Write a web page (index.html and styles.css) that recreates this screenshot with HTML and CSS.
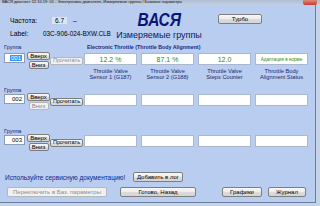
FILE: index.html
```html
<!DOCTYPE html>
<html lang="ru">
<head>
<meta charset="utf-8">
<title>ВАСЯ диагност</title>
<link rel="stylesheet" href="styles.css">
</head>
<body>
<div class="frame">
  <div class="titlebar">
    <span class="title">ВАСЯ диагност 12.10.19: 01 - Электроника двигателя, Измеряемые группы / Базовые параметры</span>
    <span class="close"></span>
  </div>
  <div class="window">
    <div class="head">
      <div class="head-left">
        <div class="info-row freq-row">
          <span class="lbl">Частота:</span>
          <span class="freq-box">6.7</span>
          <span class="dash">–</span>
        </div>
        <div class="info-row label-row">
          <span class="lbl">Label:</span>
          <span class="label-val">03C-906-024-BXW.CLB</span>
        </div>
      </div>
      <div class="head-center">
        <div class="brand">ВАСЯ</div>
        <div class="subtitle">Измеряемые группы</div>
      </div>
      <button class="btn turbo">Турбо</button>
    </div>

    <div class="groups">
      <section class="group group--titled">
        <div class="group-top">
          <span class="group-lbl">Группа</span>
          <span class="group-title">Electronic Throttle (Throttle Body Alignment)</span>
        </div>
        <div class="group-row">
          <div class="grp-input"><span class="sel">001</span></div>
          <div class="updown">
            <button class="btn up">Вверх</button>
            <button class="btn down">Вниз</button>
          </div>
          <button class="btn read" disabled>Прочитать</button>
          <div class="cells">
            <div class="cell"><div class="val">12.2 %</div><div class="cap">Throttle Valve<br>Sensor 1 (G187)</div></div>
            <div class="cell"><div class="val">87.1 %</div><div class="cap">Throttle Valve<br>Sensor 2 (G188)</div></div>
            <div class="cell"><div class="val">12.0</div><div class="cap">Throttle Valve<br>Steps Counter</div></div>
            <div class="cell"><div class="val val--small">Адаптация в норме</div><div class="cap">Throttle Body<br>Alignment Status</div></div>
          </div>
        </div>
      </section>

      <section class="group">
        <div class="group-top"><span class="group-lbl">Группа</span></div>
        <div class="group-row">
          <div class="grp-input"><span>002</span></div>
          <div class="updown">
            <button class="btn up">Вверх</button>
            <button class="btn down" disabled>Вниз</button>
          </div>
          <button class="btn read">Прочитать</button>
          <div class="cells">
            <div class="cell"><div class="val"></div></div>
            <div class="cell"><div class="val"></div></div>
            <div class="cell"><div class="val"></div></div>
            <div class="cell"><div class="val"></div></div>
          </div>
        </div>
      </section>

      <section class="group">
        <div class="group-top"><span class="group-lbl">Группа</span></div>
        <div class="group-row">
          <div class="grp-input"><span>003</span></div>
          <div class="updown">
            <button class="btn up">Вверх</button>
            <button class="btn down">Вниз</button>
          </div>
          <button class="btn read">Прочитать</button>
          <div class="cells">
            <div class="cell"><div class="val"></div></div>
            <div class="cell"><div class="val"></div></div>
            <div class="cell"><div class="val"></div></div>
            <div class="cell"><div class="val"></div></div>
          </div>
        </div>
      </section>
    </div>

    <div class="note-row">
      <span class="note">Используйте сервисную документацию!</span>
      <button class="btn log">Добавить в лог</button>
    </div>
    <div class="actions">
      <button class="btn basic" disabled>Переключить в Баз. параметры</button>
      <button class="btn done">Готово, Назад</button>
      <button class="btn graphs">Графики</button>
      <button class="btn journal">Журнал</button>
    </div>
  </div>
</div>
</body>
</html>
```

FILE: styles.css
```css
* { box-sizing: border-box; margin: 0; padding: 0; }
html, body { width: 320px; height: 206px; overflow: hidden; }
body {
  font-family: "Liberation Sans", Arial, sans-serif;
  background: #c4d3e8;
  color: #000;
}
.frame { width: 320px; height: 206px; display: flex; flex-direction: column; }

.titlebar {
  height: 5px; flex: none;
  display: flex; justify-content: space-between; align-items: flex-start;
  background: linear-gradient(#aebdd3, #c2d0e4);
  padding-left: 2px;
}
.title { font-size: 4px; line-height: 4.5px; color: #111; white-space: nowrap; overflow: hidden; }
.close {
  flex: none; width: 14px; height: 5px; margin-right: 3px;
  background: linear-gradient(#e08a7a, #c23b28);
  border-radius: 0 0 2px 2px;
}

.window {
  flex: 1;
  margin: 0 4px 3px 0;
  background: #b9cdf0;
  border-right: 1px solid #6a7d9f;
  border-bottom: 1px solid #6a7d9f;
  display: flex; flex-direction: column;
}

/* header */
.head { height: 38px; flex: none; display: flex; padding-left: 10px; }
.head-left { width: 108px; display: flex; flex-direction: column; padding-top: 10px; }
.info-row { display: flex; align-items: center; font-size: 6.8px; }
.freq-row { height: 10px; }
.label-row { height: 8px; margin-top: 4px; }
.lbl { width: 33px; flex: none; }
.freq-box {
  margin-left: 9px; width: 15px; height: 7px;
  background: #dfe5ee; font-size: 6.5px; line-height: 7px; text-align: center;
}
.dash { margin-left: 6px; }
.label-val { font-size: 6.4px; }

.head-center { width: 82px; display: flex; flex-direction: column; align-items: center; padding-top: 5.5px; }
.brand {
  font-size: 18px; line-height: 18px; font-weight: bold; font-style: italic;
  color: #0b1577; transform: scaleX(0.86);
}
.subtitle { font-size: 9px; line-height: 10px; margin-top: 1.1px; color: #0c1a5e; white-space: nowrap; }

.btn {
  font-family: "Liberation Sans", Arial, sans-serif;
  font-size: 6px; line-height: 1; color: #000;
  background: linear-gradient(#f7f7f7 0%, #ececec 50%, #dcdcdc 51%, #d4d4d4 100%);
  border: 1px solid #7e7e7e; border-radius: 2px;
  display: flex; align-items: center; justify-content: center;
  white-space: nowrap; flex: none;
}
.btn:disabled { color: #8d8d8d; background: #f1f1f1; border-color: #b3b6ba; }
.turbo { width: 44px; height: 10px; margin: 9px 0 0 18px; }

/* groups */
.groups { display: flex; flex-direction: column; padding-left: 4px; }
.group { height: 41px; display: flex; flex-direction: column; padding-top: 2px; }
.group--titled { padding-top: 0; }
.group-top { height: 7px; display: flex; align-items: center; }
.group--titled .group-top { margin-bottom: 2px; }
.group-lbl { width: 83px; flex: none; font-size: 5.5px; color: #10237a; }
.group-title { font-size: 5.3px; font-weight: bold; color: #142a84; white-space: nowrap; }

.group-row { display: flex; align-items: flex-start; }
.grp-input {
  width: 21px; height: 10px; margin-top: 1px;
  background: #fff; border: 1px solid #8f9cb4;
  display: flex; align-items: center; justify-content: flex-end; padding-right: 2px;
  font-size: 6px;
}
.sel { background: #3399ff; color: #fff; padding: 0 1px; line-height: 6px; }
.updown { margin-left: 2px; width: 23px; display: flex; flex-direction: column; }
.up { width: 23px; height: 8px; }
.down { width: 20px; height: 8px; margin: 1px 0 0 1.5px; }
.read { width: 33px; height: 8px; margin-top: 5px; font-size: 5.6px; }

.cells { margin-left: 1px; display: grid; grid-template-columns: repeat(4, 53px); column-gap: 4px; }
.cell { display: flex; flex-direction: column; }
.val {
  height: 12px; margin-top: 1px;
  background: #fff; border: 1px solid #aab7cd;
  color: #1d8a1d; font-size: 7px;
  display: flex; align-items: center; justify-content: center; white-space: nowrap;
}
.val--small { font-size: 4.6px; }
.cap { margin-top: 2.5px; font-size: 5.7px; line-height: 6.5px; text-align: center; color: #17296e; white-space: nowrap; }

/* bottom */
.note-row { display: flex; align-items: center; height: 10px; margin-top: 6px; padding-left: 5px; }
.note { width: 128px; flex: none; font-size: 6.5px; color: #10238a; white-space: nowrap; }
.log { width: 50px; height: 10px; }
.actions { display: flex; height: 10px; margin-top: 5px; padding-left: 7px; }
.basic { width: 100px; height: 10px; }
.done { width: 76px; height: 10px; margin-left: 13px; }
.graphs { width: 40px; height: 10px; margin-left: 26px; }
.journal { width: 38px; height: 10px; margin-left: 6px; }
```
